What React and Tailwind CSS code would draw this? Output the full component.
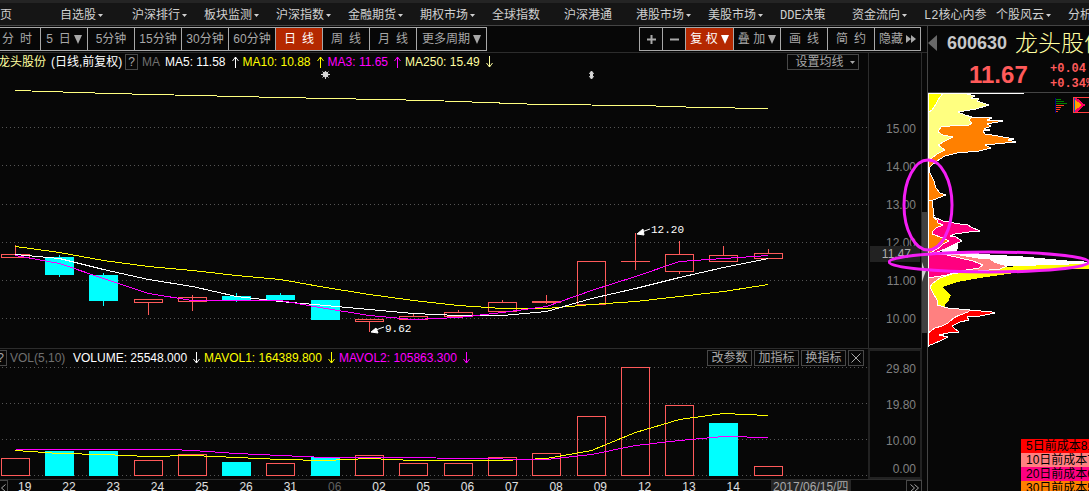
import clsx from 'clsx';

const NAV_ITEMS = [
  { label: '自选股', menu: true },
  { label: '沪深排行', menu: true },
  { label: '板块监测', menu: true },
  { label: '沪深指数', menu: true },
  { label: '金融期货', menu: true },
  { label: '期权市场', menu: true },
  { label: '全球指数' },
  { label: '沪深港通' },
  { label: '港股市场', menu: true },
  { label: '美股市场', menu: true },
  { label: 'DDE决策' },
  { label: '资金流向', menu: true },
  { label: 'L2核心内参' },
  { label: '个股风云', menu: true },
  { label: '分析' },
];

const PERIODS = [
  { label: '分\u2002时', width: 'w-[41px] pr-[6px]' },
  { label: '5\u2002日', width: 'w-[47px]', menu: true },
  { label: '5分钟', width: 'w-[47px]' },
  { label: '15分钟', width: 'w-[47px]' },
  { label: '30分钟', width: 'w-[47px]' },
  { label: '60分钟', width: 'w-[47px]' },
  { label: '日\u2002线', width: 'w-[47px]', active: true },
  { label: '周\u2002线', width: 'w-[47px]' },
  { label: '月\u2002线', width: 'w-[47px]' },
  { label: '更多周期', width: 'w-[70px]', menu: true },
];

// Open/close are pixel rows of the candle body, wick is [high, low]
const CANDLES = [
  { x: 15, body: [254, 257], wick: [245, 254], vol: 458, up: true },
  { x: 59, body: [257, 275], wick: [255, 277], vol: 451 },
  { x: 103, body: [275, 301], wick: [273, 306], vol: 451 },
  { x: 148, body: [299, 302], wick: [302, 315], vol: 460, up: true },
  { x: 192, body: [297, 301], wick: [295, 311], vol: 454, up: true },
  { x: 236, body: [296, 300], wick: [293, 302], vol: 462 },
  { x: 280, body: [295, 300], wick: [293, 300], vol: 463, volUp: true },
  { x: 325, body: [300, 320], wick: [300, 320], vol: 457 },
  { x: 369, body: [319, 321], wick: [321, 332], vol: 455, up: true },
  { x: 413, body: [316, 319], wick: [314, 316], vol: 463, up: true },
  { x: 458, body: [312, 316], wick: [310, 312], vol: 463, up: true },
  { x: 502, body: [302, 311], wick: [300, 302], vol: 457, up: true },
  { x: 546, body: [301, 302], wick: [295, 304], vol: 453, up: true },
  { x: 591, body: [261, 304], wick: [261, 261], vol: 416, up: true },
  { x: 635, body: [261, 261], wick: [233, 270], vol: 367, up: true },
  { x: 679, body: [254, 271], wick: [241, 254], vol: 405, up: true },
  { x: 723, body: [255, 261], wick: [246, 255], vol: 423, up: true, volUp: false },
  { x: 768, body: [253, 258], wick: [249, 253], vol: 466, up: true },
];

const PRICE_LINES = [
  { color: '#ffff80', points: '15,90 110,93 280,97 430,100 540,104 640,105 700,107 768,108' },
  { color: '#ffff00', points: '15,246 59,252 103,260 148,266 192,270 236,275 280,279 325,287 369,294 413,300 458,305 502,308 546,308 591,304 635,301 679,296 723,291 768,284' },
  { color: '#ffffff', points: '15,254 59,258 103,269 148,279 192,286 236,296 280,301 325,305 369,309 413,313 458,315 502,315 546,311 591,298 635,288 679,277 723,267 768,258' },
  { color: '#ff00ff', points: '15,255 59,263 103,278 148,293 192,300 236,300 280,300 325,308 369,315 413,319 458,317 502,312 546,306 591,290 635,276 679,261 723,258 768,255' },
];

const VOLUME_LINES = [
  { color: '#ffff00', points: '15,450 59,453 103,454 148,456 192,455 236,457 280,459 325,460 369,458 413,460 458,460 502,460 546,458 591,450 635,432 679,419 723,413 768,415' },
  { color: '#ff00ff', points: '15,449 170,449 192,450 236,453 280,455 325,457 413,457 458,458 546,459 591,454 635,445 679,440 723,436 768,437' },
];

const DATES = ['19', '22', '23', '24', '25', '26', '31', '06', '02', '05', '06', '07', '08', '09', '12', '13', '14'];

// Chip distribution layers, painted in order
const CHIPS = [
  { color: '#ff8000', points: '0,24 44,24 64,25 59,27 75,28 59,31 63,33 56,36 62,37 55,38 57,41 70,43 86,46 80,47 88,49 77,50 57,52 63,55 51,58 29,60 17,63 12,66 4,72 1,75 2,80 6,88 8,95 12,100 18,102 10,105 3,108 4,115 6,122 0,122' },
  { color: '#ffff80', points: '0,0 39,1 47,3 43,5 51,6 49,8 61,12 48,16 30,19 37,22 44,24 41,27 44,30 41,32 22,33 13,34 10,39 15,42 25,44 17,48 10,52 17,57 9,61 4,65 0,67' },
  { color: '#ffff00', points: '0,0 15,0 10,7 8,11 4,17 0,20' },
  { color: '#ff0080', points: '4,121 6,124 15,128 32,131 40,132 43,134 52,138 41,139 27,141 22,143 28,144 34,148 27,151 19,155 12,158 0,162' },
  { color: '#ffffff', points: '29,150 30,153 28,158 14,158' },
  { color: '#ff8000', points: '0,107 4,107 5,115 6,120 5,124 9,127 10,130 15,132 8,135 5,138 4,141 15,145 21,148 15,151 12,154 4,159 0,162' },
  { color: '#ffffff', points: '19,161 40,160 62,162 95,164 139,168 156,169 161,171 80,173' },
  { color: '#ffff00', stroke: 'none', points: '74,174 120,172 161,171 161,176 112,177 79,181 52,185 29,189 14,194 17,197 23,202 20,209 17,211 17,215 9,213 2,194 5,190 12,185 30,179' },
  { color: '#ff0000', points: '42,217 64,219 67,220 62,221 52,223 39,224 41,227 32,229 24,233 26,235 31,239 20,240 11,242 20,244 12,248 0,253 0,238' },
  { color: '#ff8080', points: '0,184 19,182 30,179 12,185 5,190 2,194 5,200 9,207 9,212 20,215 42,217 40,219 27,224 20,230 14,233 7,235 0,240' },
  { color: '#ff8080', points: '19,161 32,162 50,165 62,166 66,169 79,173 72,176 50,178 30,180 19,182' },
  { color: '#ff0080', points: '0,161 19,162 32,165 45,168 55,172 51,175 32,178 19,182 0,185' },
];

const COST_ROWS = [
  { label: '5日前成本81', color: 'bg-[#ff0000]' },
  { label: '10日前成本7', color: 'bg-[#ff8080]' },
  { label: '20日前成本6', color: 'bg-[#ff0080]' },
  { label: '30日前成本5', color: 'bg-[#ff8000]' },
];

function Caret({ className }) {
  return (
    <svg className={clsx('shrink-0', className)} width="5" height="3" viewBox="0 0 5 3" fill="currentColor">
      <path d="M0 0h5L2.500 3z" />
    </svg>
  );
}

function Triangle() {
  return (
    <svg className="shrink-0" width="8" height="9" viewBox="0 0 8 9" fill="currentColor">
      <path d="M0 0h8L4 9z" />
    </svg>
  );
}

function Trend({ down }) {
  return (
    <svg className="mr-1 ml-[6px] shrink-0" width="7" height="12" viewBox="0 0 7 12" fill="none" stroke="currentColor">
      <path d={down ? 'M3.500 0v11M0.500 7l3 4l3-4' : 'M3.500 12V1M0.500 5l3-4l3 4'} />
    </svg>
  );
}

function ToolButton({ label, width, active, menu, children }) {
  return (
    <button
      className={clsx(
        'flex h-6 shrink-0 items-center justify-center gap-[3px] border-y border-r border-[#a8a8a8] whitespace-nowrap',
        width,
        active ? 'bg-[#b42800] text-white' : 'text-[#a8a8a8]'
      )}
    >
      {label}
      {menu && <Triangle />}
      {children}
    </button>
  );
}

function SmallButton({ children, className, ...rest }) {
  return (
    <button
      className={clsx('flex h-4 shrink-0 items-center justify-center border border-[#484848] text-[#a8a8a8] whitespace-nowrap', className)}
      {...rest}
    >
      {children}
    </button>
  );
}

function NavBar() {
  return (
    <nav className="flex h-[26px] shrink-0 items-center overflow-hidden border-t-[3px] border-b border-t-[#242424] border-b-[#444] bg-[#151515] pt-[3px] font-['Liberation_Mono','Noto_Sans_CJK_SC',monospace] text-[#d0d0d0]">
      <a href="#home" className="w-[60px] shrink-0">页</a>
      {NAV_ITEMS.map((item) => (
        <a key={item.label} href="#market" className="flex w-[72px] shrink-0 items-center gap-[2px] whitespace-nowrap">
          {item.label}
          {item.menu && <Caret />}
        </a>
      ))}
    </nav>
  );
}

function Toolbar() {
  return (
    <div className="flex shrink-0 justify-between py-px">
      <div className="flex">
        {PERIODS.map((period) => (
          <ToolButton key={period.label} {...period} />
        ))}
      </div>
      <div className="mr-[6px] flex border-l border-[#a8a8a8]">
        <ToolButton width="w-[23px]">
          <svg width="9" height="9" viewBox="0 0 9 9" fill="currentColor" aria-label="放大">
            <path d="M3.500 0h2v3.500H9v2H5.500V9h-2V5.500H0v-2h3.500z" />
          </svg>
        </ToolButton>
        <ToolButton width="w-[23px]">
          <svg width="9" height="9" viewBox="0 0 9 9" fill="currentColor" aria-label="缩小">
            <path d="M0 3.500h9v2H0z" />
          </svg>
        </ToolButton>
        <ToolButton label={'复 权'} width="w-[48px]" active menu />
        <ToolButton label={'叠 加'} width="w-[47px]" menu />
        <ToolButton label={'画\u2002线'} width="w-[47px]" />
        <ToolButton label={'简\u2002约'} width="w-[47px]" />
        <ToolButton label="隐藏" width="w-[46px]">
          <svg width="10" height="8" viewBox="0 0 10 8" fill="currentColor">
            <path d="M0 0l5 4l-5 4zM5 0l5 4l-5 4z" />
          </svg>
        </ToolButton>
      </div>
    </div>
  );
}

function GridLines({ rows }) {
  return rows.map((y) => (
    <line key={y} x1="2" x2="868" y1={y + 0.5} y2={y + 0.5} stroke="#555" strokeDasharray="1 3" />
  ));
}

function Polylines({ lines }) {
  return lines.map((line) => (
    <polyline key={line.points} points={line.points} stroke={line.color} fill="none" transform="translate(0.5 0.5)" />
  ));
}

function PriceChart() {
  return (
    <svg className="block w-full" viewBox="0 71 868 277" shapeRendering="crispEdges">
      <GridLines rows={[127, 165, 204, 242, 280, 318]} />
      {CANDLES.map(({ x, body, wick, up }) => (
        <g key={x} stroke={up ? '#ff5a5a' : '#00ffff'} fill={up ? 'none' : '#00ffff'}>
          <line x1={x + 0.5} x2={x + 0.5} y1={wick[0]} y2={wick[1]} />
          <rect x={x - 13.5} y={body[0] + 0.5} width="28" height={Math.max(body[1] - body[0] - (up ? 0 : 1), 0.01)} />
        </g>
      ))}
      <line x1="679.5" x2="679.5" y1="271" y2="274" stroke="#ff5a5a" />
      <Polylines lines={PRICE_LINES} />

      {/* High and low marks */}
      <g stroke="#fff" fill="#fff" shapeRendering="auto">
        <path d="M650 229L639 233M643 229l-6 5l7 1z" />
        <path d="M384 327L373 331M376 328l-5 4l7 1z" />
      </g>
      <g fill="#fff" fontSize="11" fontFamily="Liberation Mono, monospace">
        <text x="651" y="233">12.20</text>
        <text x="385" y="332">9.62</text>
      </g>

      {/* Event markers */}
      <g fill="#d8d8d8" stroke="#d8d8d8" shapeRendering="auto">
        <circle cx="325.500" cy="74.500" r="2.500" />
        <path d="M325.500 70v9M321 74.500h9M322.500 71.500l6 6M328.500 71.500l-6 6" />
        <path d="M591.500 71l2 2.500h-1v3h1l-2 2.500l-2-2.500h1v-3h-1z" />
      </g>
    </svg>
  );
}

function VolumeChart() {
  return (
    <svg className="block w-full" viewBox="0 366 868 111" shapeRendering="crispEdges">
      <GridLines rows={[367, 403, 439, 475]} />
      {CANDLES.map(({ x, vol, up, volUp = up }) => (
        <rect
          key={x}
          x={x - 13.5}
          y={vol + 0.5}
          width="28"
          height={475 - vol}
          stroke={volUp ? '#ff5a5a' : '#00ffff'}
          fill={volUp ? 'none' : '#00ffff'}
        />
      ))}
      <Polylines lines={VOLUME_LINES} />
    </svg>
  );
}

function PricePanel() {
  return (
    <section className="flex border-t border-[#2c2c2c]">
      <div className="min-w-0 flex-1">
        <div className="flex h-[18px] items-center overflow-hidden whitespace-nowrap">
          <span className="-ml-[2px] text-[#ffffa0]">龙头股份</span>
          <span className="ml-[5px] w-[74px] text-white">(日线,前复权)</span>
          <SmallButton className="w-[13px]">?</SmallButton>
          <span className="ml-1 w-[23px] text-[#707070]">MA</span>
          <span className="flex items-center text-white">MA5: 11.58<Trend /></span>
          <span className="flex items-center text-[#ffff00]">MA10: 10.88<Trend /></span>
          <span className="flex items-center text-[#ff00ff]">MA3: 11.65<Trend /></span>
          <span className="flex items-center text-[#ffffa0]">MA250: 15.49<Trend down /></span>
          <SmallButton className="mr-[9px] ml-auto w-[72px] gap-[6px] pl-1">
            设置均线
            <Caret />
          </SmallButton>
        </div>
        <PriceChart />
      </div>
      <div className="relative w-[54px] shrink-0 border-x border-[#2c2c2c] pt-[57px] pr-[5px] text-right text-[#808080]">
        {['15.00', '14.00', '13.00', '12.00', '11.00', '10.00'].map((price) => (
          <div key={price} className="h-[38px] leading-[38px]">{price}</div>
        ))}
        <div className="absolute top-[193px] right-[1px] left-px h-4 bg-[#222] pr-[9px] leading-4 text-[#b0b0b0]">11.47</div>
      </div>
      <div className="flex w-[5px] shrink-0 flex-col pt-[159px]">
        <div className="h-[121px] bg-[#404040] pt-[50px]">
          <svg width="4" height="20" viewBox="0 0 4 20" fill="#d0d0d0">
            <path d="M0 0l2 6l2 3l-2 5l-2 6z" />
          </svg>
        </div>
      </div>
    </section>
  );
}

function VolumePanel() {
  return (
    <section className="mr-[5px] flex border-t border-[#2c2c2c]">
      <div className="min-w-0 flex-1">
        <div className="flex h-[17px] items-center overflow-hidden whitespace-nowrap">
          <SmallButton className="-ml-[6px] w-[13px]">?</SmallButton>
          <span className="ml-[3px] w-[63px] text-[#707070]">VOL(5,10)</span>
          <span className="flex items-center text-white">VOLUME: 25548.000<Trend down /></span>
          <span className="flex items-center text-[#ffff00]">MAVOL1: 164389.800<Trend down /></span>
          <span className="flex items-center text-[#ff00ff]">MAVOL2: 105863.300<Trend down /></span>
          <div className="mr-1 ml-auto flex gap-[2px]">
            <SmallButton className="w-[45px]">改参数</SmallButton>
            <SmallButton className="w-[45px]">加指标</SmallButton>
            <SmallButton className="w-[45px]">换指标</SmallButton>
            <SmallButton className="w-4" aria-label="关闭">
              <svg width="10" height="10" viewBox="0 0 10 10" stroke="currentColor">
                <path d="M0.500 0.500l9 9M9.500 0.500l-9 9" />
              </svg>
            </SmallButton>
          </div>
        </div>
        <VolumeChart />
      </div>
      <div className="flex w-[54px] shrink-0 flex-col border-2 border-[#222] pt-[10px] pr-[4px] text-right leading-4 text-[#808080]">
        <span className="h-9">29.80</span>
        <span className="h-9">19.80</span>
        <span className="h-7">10.00</span>
        <span>0.00</span>
      </div>
    </section>
  );
}

function DateAxis() {
  return (
    <div className="mr-[5px] flex border-t border-[#2c2c2c] leading-[14px] text-[#e0e0e0]">
      <SmallButton className="w-2 border-l-0" aria-label="更早">
        <svg width="5" height="8" viewBox="0 0 5 8" fill="none" stroke="currentColor">
          <path d="M4.500 0.500l-4 3.500l4 3.500" />
        </svg>
      </SmallButton>
      <div className="flex flex-1 justify-between pr-[31px] pl-[10px]">
        {DATES.map((date, i) => (
          <span key={i} className={i === 7 ? 'text-[#606060]' : undefined}>{date}</span>
        ))}
      </div>
      <div className="mr-[55px] w-[80px] bg-[#262626] pl-[2px] whitespace-nowrap text-[#a8a8a8]">2017/06/15/四</div>
      <SmallButton className="w-4" aria-label="更晚">
        <svg width="9" height="8" viewBox="0 0 9 8" fill="none" stroke="currentColor">
          <path d="M0.500 0.500l4 3.500l-4 3.500M4.500 0.500l4 3.500l-4 3.500" />
        </svg>
      </SmallButton>
    </div>
  );
}

function ChipChart() {
  return (
    <svg className="block w-[161px]" viewBox="0 0 161 346" shapeRendering="crispEdges">
      {CHIPS.map((layer) => (
        <polygon key={layer.points} points={layer.points} fill={layer.color} stroke={layer.stroke || '#fff'} />
      ))}
      <path d="M0.500 0v254M0 0.500h96" stroke="#fff" />

      {/* Display mode icons */}
      <path d="M127.500 5v15" stroke="#000080" />
      <path d="M128 6.500h5M128 8.500h8M128 10.500h11" stroke="#008000" />
      <path d="M128 12.500h8M128 14.500h5M128 16.500h4M128 18.500h2" stroke="#ff4020" />
      <rect x="145.500" y="4.500" width="16" height="15" fill="none" stroke="#ff4040" />
      <path d="M147 5l3 1l3 3l5 3l-5 3l-3 4h-3z" fill="#ff0060" />
      <path d="M147 7l3 2l3 3l-3 3l-3 2z" fill="#ffa000" />
      <path d="M146.500 5v14" stroke="#0060c0" />
    </svg>
  );
}

function QuotePanel() {
  return (
    <aside className="relative w-[162px] shrink-0 border-l border-[#444]">
      <div className="h-[67px] overflow-hidden border-b border-[#444] whitespace-nowrap">
        <div className="flex h-[34px] items-center">
          <button aria-label="上一只" className="mr-[10px] shrink-0 text-[#686868]">
            <svg width="9" height="16" viewBox="0 0 9 16" fill="currentColor">
              <path d="M9 0v16L0 8z" />
            </svg>
          </button>
          <span className="text-[18px] font-bold text-[#c8c8c8]">600630</span>
          <span className="ml-2 text-[23px] font-light text-[#ffffa0]">龙头股份</span>
        </div>
        <div className="flex pl-[41px] text-[#ff5a5a]">
          <span className="w-[81px] shrink-0 text-[24px] leading-[30px] font-bold">11.67</span>
          <span className="pt-[2px] font-['Liberation_Mono',monospace] leading-[15px] font-bold">
            +0.04
            <br />
            +0.34%
          </span>
        </div>
      </div>
      <ChipChart />
      <ul className="ml-[93px] text-black">
        {COST_ROWS.map((row) => (
          <li key={row.label} className={clsx('h-[14px] overflow-hidden pl-[5px] leading-[14px] whitespace-nowrap', row.color)}>
            {row.label}
          </li>
        ))}
      </ul>

      {/* Hand-drawn circles over the chart edge */}
      <svg className="pointer-events-none absolute top-[129px] -left-10 h-[122px] w-[202px]" viewBox="0 0 202 122" fill="none" stroke="#f41ef4" strokeWidth="3">
        <ellipse cx="40" cy="50" rx="24" ry="45" />
        <ellipse cx="101" cy="107" rx="100" ry="10" />
      </svg>
    </aside>
  );
}

export default function App() {
  return (
    <div className="flex h-screen flex-col overflow-hidden bg-[#070707] font-['Liberation_Sans','Noto_Sans_CJK_SC',sans-serif] text-xs">
      <NavBar />
      <div className="flex min-h-0 flex-1 overflow-hidden">
        <main className="min-w-0 flex-1">
          <Toolbar />
          <PricePanel />
          <VolumePanel />
          <DateAxis />
        </main>
        <QuotePanel />
      </div>
    </div>
  );
}
